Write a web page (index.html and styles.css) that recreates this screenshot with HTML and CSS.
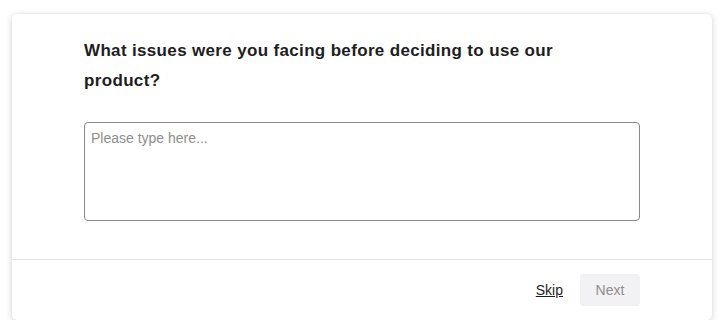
FILE: index.html
```html
<!DOCTYPE html>
<html lang="en">
<head>
  <meta charset="UTF-8">
  <title>Survey</title>
  <link rel="stylesheet" href="styles.css">
</head>
<body>
  <div class="card">
    <div class="card-body">
      <h2 class="question">What issues were you facing before deciding to use our product?</h2>
      <textarea class="answer" placeholder="Please type here..."></textarea>
    </div>
    <div class="card-footer">
      <a href="#" class="skip-link">Skip</a>
      <button class="next-btn" disabled>Next</button>
    </div>
  </div>
</body>
</html>
```

FILE: styles.css
```css
body {
  margin: 0;
  padding: 14px 16px 0 12px;
  background: #fff;
  font-family: "Liberation Sans", Arial, sans-serif;
}
.card {
  width: 700px;
  background: #fff;
  border-radius: 5px;
  box-shadow: 0 1px 6px rgba(0, 0, 0, 0.2);
}
.card-body {
  padding: 22px 72px 38px 72px;
  border-bottom: 1px solid #e6e4e8;
}
.question {
  max-width: 500px;
  margin: 0 0 26px;
  font-size: 17px;
  line-height: 30px;
  font-weight: bold;
  letter-spacing: 0.34px;
  color: #1e1e22;
}
.answer {
  display: block;
  box-sizing: border-box;
  width: 100%;
  height: 99px;
  padding: 7px 6px;
  border: 1px solid #8a8a8a;
  border-radius: 4px;
  resize: none;
  font-family: "Liberation Sans", Arial, sans-serif;
  font-size: 14px;
  background: #fff;
}
.answer::placeholder {
  color: #8e8e8e;
}
.card-footer {
  display: flex;
  justify-content: flex-end;
  align-items: center;
  gap: 17px;
  height: 60px;
  padding-right: 72px;
}
.skip-link {
  color: #1e1e22;
  font-size: 14px;
}
.next-btn {
  width: 60px;
  height: 32px;
  border: none;
  border-radius: 3px;
  background: #f2f1f4;
  color: #8e8e8e;
  font-family: "Liberation Sans", Arial, sans-serif;
  font-size: 14px;
}
```
